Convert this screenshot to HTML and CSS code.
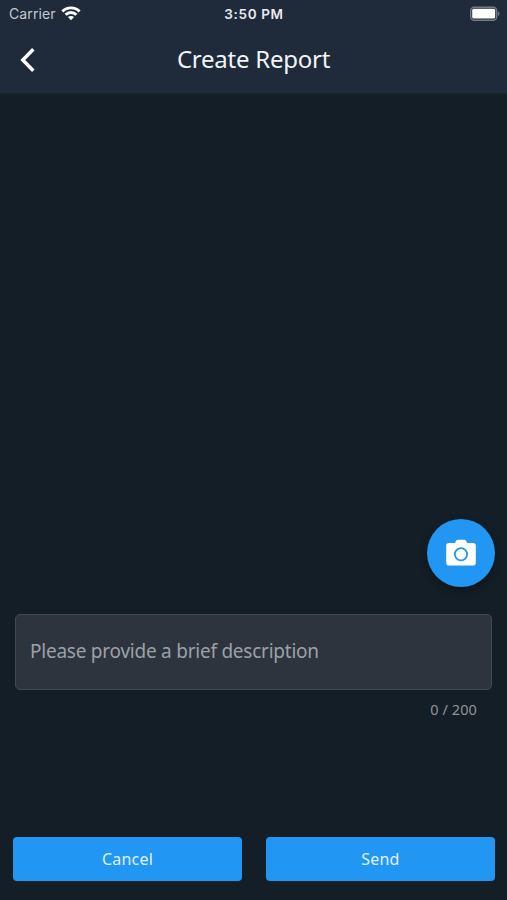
FILE: index.html
```html
<!DOCTYPE html>
<html lang="en">
<head>
<meta charset="utf-8">
<title>Create Report</title>
<link rel="stylesheet" href="styles.css">
</head>
<body>
<div class="screen">
  <header class="header">
    <div class="status">
      <div class="carrier"><span>Carrier</span>
        <svg class="wifi" width="20" height="15" viewBox="0 0 20 15" fill="none" stroke="#fff" stroke-width="2.900"><path d="M1.400 5.500C6 .7 14 .7 18.600 5.500M4.600 8.700C7.600 5.700 12.400 5.700 15.400 8.700"/><path d="M10 14.200L6.900 11.100C8.700 9.500 11.300 9.500 13.100 11.100Z" fill="#fff" stroke="none"/></svg>
      </div>
      <span class="time">3:50 PM</span>
      <svg class="battery" width="32" height="16" viewBox="0 0 32 16"><rect x="1.700" y="1.200" width="26" height="13" rx="3.500" fill="none" stroke="#737c88" stroke-width="1.400"/><rect x="3.200" y="2.800" width="23" height="9.800" rx="1.500" fill="#fff"/><path d="M29 5.200q3 2.500 0 5z" fill="#737c88"/></svg>
    </div>
    <div class="nav">
      <svg class="back" width="18" height="26" viewBox="0 0 18 26" fill="none" stroke="#fff" stroke-width="3.500"><path d="M14.300 2.200L3.800 13L14.300 23.800"/></svg>
      <h1 class="title">Create Report</h1>
    </div>
  </header>
  <main class="content">
    <button class="camera" aria-label="Camera">
      <svg width="32" height="28" viewBox="0 0 32 28"><path d="M4 4h6l1-2q.6-1.200 2-1.200h6.200q1.400 0 2 1.200l1 2H28q2.800 0 2.800 2.800v17q0 2.800-2.800 2.800H4q-2.800 0-2.800-2.800v-17Q1.200 4 4 4z" fill="#fff"/><circle cx="16" cy="15.300" r="6.100" fill="none" stroke="#2196f3" stroke-width="1.800"/></svg>
    </button>
    <div class="field"><span class="placeholder">Please provide a brief description</span></div>
    <div class="counter">0 / 200</div>
    <div class="actions">
      <button class="btn">Cancel</button>
      <button class="btn send">Send</button>
    </div>
  </main>
</div>
</body>
</html>
```
FILE: styles.css
```css
* { box-sizing: border-box; }
body { margin: 0; background: #141e26; }
.screen {
  width: 507px; height: 900px;
  display: flex; flex-direction: column;
  background: #141e26;
  font-family: "Noto Sans", sans-serif;
}
.header { height: 94px; background: #1f2a3a; border-bottom: 1px solid #19242f; }
.status {
  height: 27px; padding: 0 6px 0 9px;
  display: grid; grid-template-columns: 1fr auto 1fr; align-items: center;
  font-family: Inter, sans-serif; font-size: 14px; line-height: 27px;
}
.carrier { display: flex; align-items: center; gap: 5px; color: #c3c9d1; letter-spacing: .1px; }
.time { color: #e8ecf0; font-weight: 600; font-size: 13.500px; letter-spacing: .65px; position: relative; left: -1px; top: 1px; }
.battery { justify-self: end; }
.nav {
  height: 66px; padding: 0 19px;
  display: grid; grid-template-columns: 1fr auto 1fr; align-items: center;
}
.title { margin: -2px 0 0; font-size: 24px; line-height: 32px; font-weight: 400; color: #f1f5f8; letter-spacing: -.25px; }
.content { flex: 1; display: flex; flex-direction: column; justify-content: flex-end; }
.camera {
  width: 68px; height: 68px; padding: 0;
  margin: 0 12.500px 27px 0; align-self: flex-end;
  display: flex; align-items: center; justify-content: center;
  border: 0; border-radius: 50%; background: #2196f3;
  box-shadow: 0 4px 8px rgba(0, 0, 0, .3);
}
.field {
  height: 76px; margin: 0 15px; padding: 0 14px;
  display: flex; align-items: center;
  border: 1.500px solid #3f4a53; border-radius: 5px; background: #2d343d;
}
.placeholder { position: relative; top: -1px; font-size: 19px; letter-spacing: -.24px; color: #9ba1a7; white-space: nowrap; }
.counter {
  height: 20px; margin: 9px 30px 0; text-align: right;
  font-size: 14.500px; line-height: 20px; color: #8e959a; letter-spacing: .1px;
}
.actions { display: flex; gap: 24px; margin: 117.500px 12px 19.500px 13px; }
.btn {
  flex: 1; height: 44px; padding: 0;
  border: 0; border-radius: 4px; background: #2196f3; color: #e0f2ff;
  font: 400 16px "Noto Sans", sans-serif; letter-spacing: .2px;
}
```
